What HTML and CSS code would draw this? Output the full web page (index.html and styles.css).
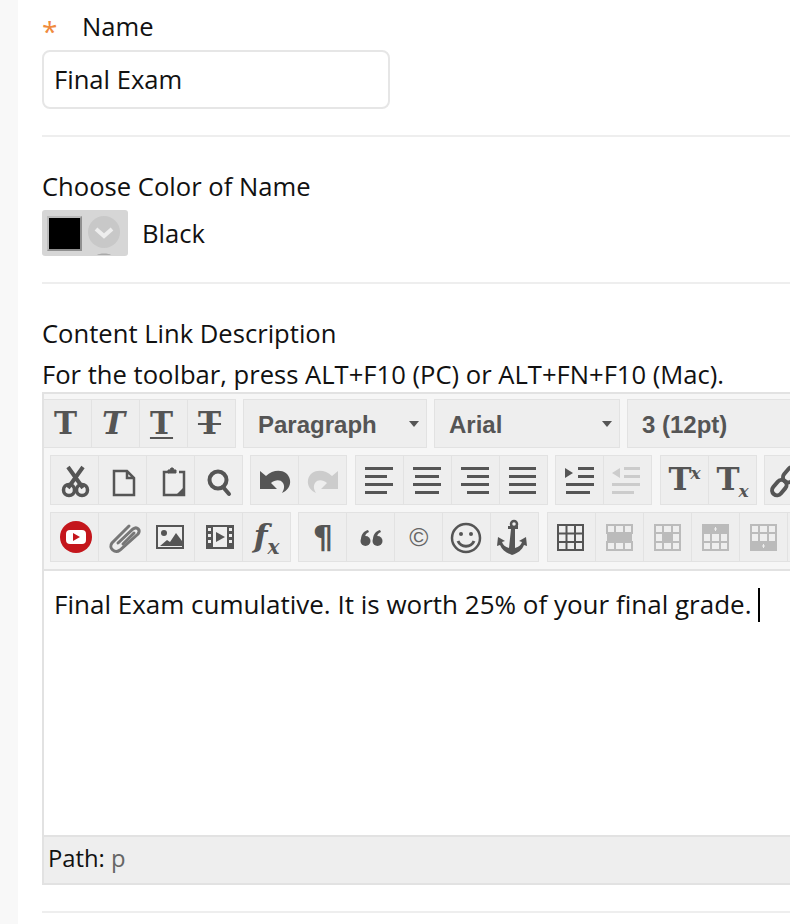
FILE: index.html
```html
<!DOCTYPE html>
<html lang="en">
<head>
<meta charset="UTF-8" />
<title>Content Link</title>
<link rel="stylesheet" href="styles.css">
</head>
<body>
<div class="strip"></div>
<main class="form">

<!-- Name -->
<div class="field-label name-label"><span class="star">*</span>Name</div>
<div class="text-input">Final Exam</div>
<div class="rule rule-first"></div>

<!-- Color -->
<div class="field-label color-label">Choose Color of Name</div>
<div class="color-row">
  <div class="color-pick">
    <span class="swatch"></span>
    <svg class="chev" width="40" height="46" viewBox="0 0 40 46">
      <circle cx="20" cy="22" r="16" fill="#c8c8c8"/>
      <path d="M12 19l8 7 8-7" fill="none" stroke="#eee" stroke-width="4"/>
      <path d="M13 45c2-2 12-2 14 0z" fill="#aaa"/>
    </svg>
  </div>
  <span class="color-name">Black</span>
</div>
<div class="rule rule-second"></div>

<!-- Description -->
<div class="field-label desc-label">Content Link Description</div>
<div class="hint">For the toolbar, press ALT+F10 (PC) or ALT+FN+F10 (Mac).</div>

<div class="editor">
  <div class="toolbar">
    <div class="row row-one">
      <div class="group">
        <span class="btn t-icon">T</span>
        <span class="btn t-icon t-italic">T</span>
        <span class="btn t-icon t-under">T</span>
        <span class="btn t-icon t-strike">T</span>
      </div>
      <div class="select sel-para">Paragraph<i class="caret-down"></i></div>
      <div class="select sel-font">Arial<i class="caret-down"></i></div>
      <div class="select sel-size">3 (12pt)</div>
    </div>

    <div class="row">
      <div class="group">
        <span class="btn"><svg width="48" height="48" viewBox="0 0 48 48" fill="none" stroke="#555"><path d="M17 11l15 21M32 11L17 32" stroke-width="4"/><circle cx="18" cy="34" r="5.500" stroke-width="3.500"/><circle cx="31" cy="34" r="5.500" stroke-width="3.500"/></svg></span>
        <span class="btn"><svg width="48" height="48" viewBox="0 0 48 48" fill="none" stroke="#555" stroke-width="2.500"><path d="M15 15h13l7 7v17H15zM28 15v7h7"/></svg></span>
        <span class="btn"><svg width="48" height="48" viewBox="0 0 48 48" fill="none" stroke="#555" stroke-width="2.500"><path d="M22 16h-5v23h20V16h-5"/><path d="M21 17v-3h2l1-2h2l1 2h2v3z" fill="#555" stroke-width="1"/><path d="M37 31v8h-8z" fill="#555" stroke="none"/></svg></span>
        <span class="btn"><svg width="48" height="48" viewBox="0 0 48 48" fill="none" stroke="#555" stroke-width="4"><circle cx="23" cy="24" r="8.500"/><path d="M28 31l6 7" stroke-linecap="round"/></svg></span>
      </div>
      <div class="group">
        <span class="btn"><svg width="48" height="48" viewBox="0 0 48 48" fill="#555"><path d="M9 15l6 5c8-8 22-7 24 4 1 6-3 11-8 13 2-3 3-7 1-10-3-4-8-3-12 0l6 6H9z"/></svg></span>
        <span class="btn off"><svg width="48" height="48" viewBox="0 0 48 48" fill="#ccc"><path d="M39 15l-6 5c-8-8-22-7-24 4-1 6 3 11 8 13-2-3-3-7-1-10 3-4 8-3 12 0l-6 6h17z"/></svg></span>
      </div>
      <div class="group">
        <span class="btn"><svg width="48" height="48" viewBox="0 0 48 48" fill="#555"><path d="M9 11h28v3H9zM9 19h22v3H9zM9 27h28v3H9zM9 35h22v3H9z"/></svg></span>
        <span class="btn"><svg width="48" height="48" viewBox="0 0 48 48" fill="#555"><path d="M9 11h28v3H9zM11 19h24v3H11zM9 27h28v3H9zM11 35h24v3H11z"/></svg></span>
        <span class="btn"><svg width="48" height="48" viewBox="0 0 48 48" fill="#555"><path d="M9 11h28v3H9zM15 19h22v3H15zM9 27h28v3H9zM15 35h22v3H15z"/></svg></span>
        <span class="btn"><svg width="48" height="48" viewBox="0 0 48 48" fill="#555"><path d="M9 11h27v3H9zM9 19h27v3H9zM9 27h27v3H9zM9 35h27v3H9z"/></svg></span>
      </div>
      <div class="group">
        <span class="btn"><svg width="48" height="48" viewBox="0 0 48 48" fill="#555"><path d="M9 12l8 5-8 5zM22 11h16v3H22zM22 19h16v3H22zM10 27h28v3H10zM10 35h24v3H10z"/></svg></span>
        <span class="btn off"><svg width="48" height="48" viewBox="0 0 48 48" fill="#ccc"><path d="M16 12l-8 5 8 5zM20 11h16v3H20zM20 19h16v3H20zM8 27h28v3H8zM8 35h22v3H8z"/></svg></span>
      </div>
      <div class="group">
        <span class="btn t-icon t-script">T<sup>x</sup></span>
        <span class="btn t-icon t-script">T<sub>x</sub></span>
      </div>
      <div class="group">
        <span class="btn"><svg width="48" height="48" viewBox="0 0 48 48" fill="none" stroke="#555" stroke-width="4"><rect x="6" y="27" width="17" height="10" rx="5" transform="rotate(-50 14 32)"/><rect x="17" y="14" width="17" height="10" rx="5" transform="rotate(-50 25 19)"/></svg></span>
      </div>
    </div>

    <div class="row">
      <div class="group">
        <span class="btn"><svg width="48" height="48" viewBox="0 0 48 48"><circle cx="25" cy="24" r="16" fill="#c4161c"/><rect x="15" y="17" width="20" height="14" rx="4" fill="#fff"/><path d="M22 20l7 4-7 4z" fill="#c4161c"/></svg></span>
        <span class="btn"><svg width="48" height="48" viewBox="0 0 48 48" fill="none" stroke="#777" stroke-width="3" stroke-linecap="round"><path d="M19 30l15-14c4-3 8 1 5 5L21 37c-5 4-12-2-8-7l17-17"/><path d="M24 31l11-11"/></svg></span>
        <span class="btn"><svg width="48" height="48" viewBox="0 0 48 48" fill="#555"><path fill-rule="evenodd" d="M9 12h28v24H9zm2 2v20h24V14z"/><circle cx="17" cy="20" r="3"/><path d="M13 33l7-6 3 2 6-9 6 8v5z"/></svg></span>
        <span class="btn"><svg width="48" height="48" viewBox="0 0 48 48" fill="#555"><path fill-rule="evenodd" d="M11 12h28v24H11zm7 2v20h14V14zm-5 1v3h3v-3zm0 6v3h3v-3zm0 6v3h3v-3zm21-12v3h3v-3zm0 6v3h3v-3zm0 6v3h3v-3z"/><path d="M21 19l9 5-9 5z"/></svg></span>
        <span class="btn t-icon t-fx"><i>f</i><sub>x</sub></span>
      </div>
      <div class="group">
        <span class="btn glyph">¶</span>
        <span class="btn"><svg width="48" height="48" viewBox="0 0 48 48" fill="#555"><circle cx="18.500" cy="28" r="5"/><path d="M14 27c0-6 3-9 7-10l1 2c-3 1-4 3-4 6z"/><circle cx="30.500" cy="28" r="5"/><path d="M26 27c0-6 3-9 7-10l1 2c-3 1-4 3-4 6z"/></svg></span>
        <span class="btn glyph copy">©</span>
        <span class="btn"><svg width="48" height="48" viewBox="0 0 48 48" fill="none" stroke="#555" stroke-width="2.500"><circle cx="23" cy="25" r="14"/><path d="M15 28c3 7 13 7 16 0" stroke-width="3"/><circle cx="18" cy="21" r="2" fill="#555" stroke="none"/><circle cx="28" cy="21" r="2" fill="#555" stroke="none"/></svg></span>
        <span class="btn"><svg width="48" height="48" viewBox="0 0 48 48" fill="#555"><path d="M20 16h-3v-3h4v0h6v3h-3v19c4-1 6-3 7-6l-3-1 7-4 1 9-3-1c-2 5-6 8-12 10-6-2-10-5-12-10l-3 1 1-9 7 4-3 1c1 3 3 5 7 6z"/><circle cx="23" cy="11" r="3" fill="none" stroke="#555" stroke-width="2.500"/></svg></span>
      </div>
      <div class="group">
        <span class="btn"><svg width="48" height="48" viewBox="0 0 48 48" fill="none" stroke="#555" stroke-width="2"><path d="M10 12h25v25H10zM18.500 12v25M27 12v25M10 20.500h25M10 29h25"/></svg></span>
        <span class="btn off"><svg width="48" height="48" viewBox="0 0 48 48" fill="#bbb"><path d="M11 12h25v8H11zM11 29h25v8H11z" fill="none" stroke="#bbb" stroke-width="2"/><path d="M19 12v8M28 12v8M19 29v8M28 29v8" stroke="#bbb" stroke-width="2"/><path d="M11 20h25v9H11z"/></svg></span>
        <span class="btn off"><svg width="48" height="48" viewBox="0 0 48 48" fill="#bbb"><path d="M11 12h25v25H11zM19 12v25M28 12v25M11 20h25M11 29h25" fill="none" stroke="#bbb" stroke-width="2"/><path d="M19 20h9v9h-9z"/></svg></span>
        <span class="btn off"><svg width="48" height="48" viewBox="0 0 48 48" fill="#bbb"><path d="M11 12h25v25H11zM19 20v17M28 20v17M11 20h25M11 29h25" fill="none" stroke="#bbb" stroke-width="2"/><path d="M11 12h25v8H11z"/><path d="M22 16h3M23.500 14v4" stroke="#eee"/></svg></span>
        <span class="btn off"><svg width="48" height="48" viewBox="0 0 48 48" fill="#bbb"><path d="M11 12h25v25H11zM19 12v17M28 12v17M11 20h25M11 29h25" fill="none" stroke="#bbb" stroke-width="2"/><path d="M11 29h25v8H11z"/><path d="M22 33h3M23.500 31v4" stroke="#eee"/></svg></span>
        <span class="btn"></span>
      </div>
    </div>
  </div>

  <div class="editor-body"><p>Final Exam cumulative. It is worth 25% of your final grade.<span class="text-caret"></span></p></div>
  <div class="path-bar">Path: <span class="path-tag">p</span></div>
</div>

<div class="rule rule-last"></div>
</main>
</body>
</html>
```

FILE: styles.css
```css
/* Page */
body {
  margin: 0;
  height: 924px;
  display: flex;
  overflow: hidden;
  background: #fff;
  font-family: "Open Sans", sans-serif;
  font-size: 25.6px;
  color: #111;
}
.strip {
  width: 18px;
  flex-shrink: 0;
  background: #f8f8f8;
}
.form {
  flex: 1;
  min-width: 0;
  padding: 0 0 0 24px;
  overflow: hidden;
}

/* Fields */
.field-label {
  height: 34px;
  line-height: 34px;
}
.name-label { margin-top: 10px; }
.star {
  display: inline-block;
  width: 40px;
  color: #f08a3c;
  font-size: 28px;
  line-height: 0;
  vertical-align: -6px;
}
.text-input {
  box-sizing: border-box;
  width: 348px;
  height: 59px;
  margin-top: 6px;
  padding: 0 10px;
  line-height: 55px;
  border: 2px solid #e6e6e6;
  border-radius: 8px;
}
.rule {
  height: 2px;
  background: #eee;
}
.rule-first { margin-top: 26px; }
.rule-second { margin-top: 26px; }
.rule-last { margin-top: 26px; }

/* Color */
.color-label { margin-top: 33px; }
.color-row {
  display: flex;
  align-items: center;
  margin-top: 6px;
}
.color-pick {
  display: flex;
  align-items: center;
  width: 86px;
  height: 46px;
  background: #d6d6d6;
  border-radius: 3px;
}
.swatch {
  box-sizing: border-box;
  width: 35px;
  height: 35px;
  margin-left: 5px;
  background: #000;
  border: 2px solid #8f8f8f;
  border-top-color: #bbb;
  border-left-color: #bbb;
}
.chev { margin-left: 2px; }
.color-name { margin-left: 14px; }

/* Description */
.desc-label { margin-top: 33px; }
.hint {
  height: 41px;
  line-height: 48px;
  white-space: nowrap;
}

/* Editor */
.editor {
  box-sizing: border-box;
  width: 800px;
  border: 2px solid #e2e2e2;
}
.toolbar {
  height: 177px;
  background: #f6f6f6;
  border-bottom: 2px solid #e2e2e2;
  box-sizing: border-box;
  padding-top: 5px;
}
.row {
  display: flex;
  gap: 7.4px;
  height: 50px;
  margin-bottom: 7px;
  padding-left: 6px;
  white-space: nowrap;
}
.row-one {
  gap: 7px;
  height: 49px;
  padding-left: 0;
  margin-left: -1px;
}
.row-one .btn { padding-right: 4px; }
.group {
  display: flex;
  border: 1px solid #e2e2e2;
  background: #eee;
}
.btn {
  box-sizing: border-box;
  width: 48px;
  height: 48px;
  flex-shrink: 0;
  border-right: 1px solid #e2e2e2;
  text-align: center;
  color: #555;
  display: block;
}
.btn:last-child {
  width: 47px;
  border-right: none;
}
.btn svg { display: block; }

/* Text icons */
.t-icon {
  font-family: "DejaVu Serif", serif;
  font-weight: bold;
  font-size: 31px;
  line-height: 46px;
}
.t-italic { font-style: italic; }
.t-under {
  text-decoration: underline;
  text-underline-offset: 3px;
  text-decoration-thickness: 2px;
}
.t-strike {
  text-decoration: line-through;
  text-decoration-thickness: 2px;
}
.t-script { letter-spacing: -1px; }
.t-script sup, .t-script sub {
  font-size: 17px;
  font-style: italic;
  line-height: 0;
}
.t-fx { font-size: 32px; }
.t-fx sub {
  font-size: 20px;
  font-style: italic;
  line-height: 0;
}
.glyph {
  font-family: "DejaVu Sans", sans-serif;
  font-weight: bold;
  font-size: 32px;
  line-height: 48px;
}
.copy {
  font-family: "Liberation Sans", sans-serif;
  font-weight: normal;
  font-size: 26px;
  color: #666;
}

/* Selects */
.select {
  box-sizing: border-box;
  position: relative;
  height: 49px;
  padding-left: 14px;
  background: #eee;
  border: 1px solid #e2e2e2;
  font-family: "Liberation Sans", sans-serif;
  font-weight: bold;
  font-size: 24px;
  line-height: 49px;
  color: #555;
}
.sel-para { width: 184px; }
.sel-font { width: 186px; }
.sel-size { width: 200px; }
.caret-down {
  position: absolute;
  right: 7px;
  top: 21px;
  border: 5px solid transparent;
  border-top: 6px solid #555;
  border-bottom: none;
}

/* Text area */
.editor-body {
  height: 264px;
  background: #fff;
}
.editor-body p {
  margin: 0;
  padding: 15px 10px;
  font-size: 26px;
  line-height: 36px;
  white-space: nowrap;
}
.text-caret {
  display: inline-block;
  width: 2px;
  height: 34px;
  margin-left: 7px;
  vertical-align: -8px;
  background: #000;
}
.path-bar {
  box-sizing: border-box;
  height: 48px;
  padding-left: 4px;
  line-height: 42px;
  font-size: 23.8px;
  background: #eee;
  border-top: 2px solid #e2e2e2;
}
.path-tag { color: #666; }
```
